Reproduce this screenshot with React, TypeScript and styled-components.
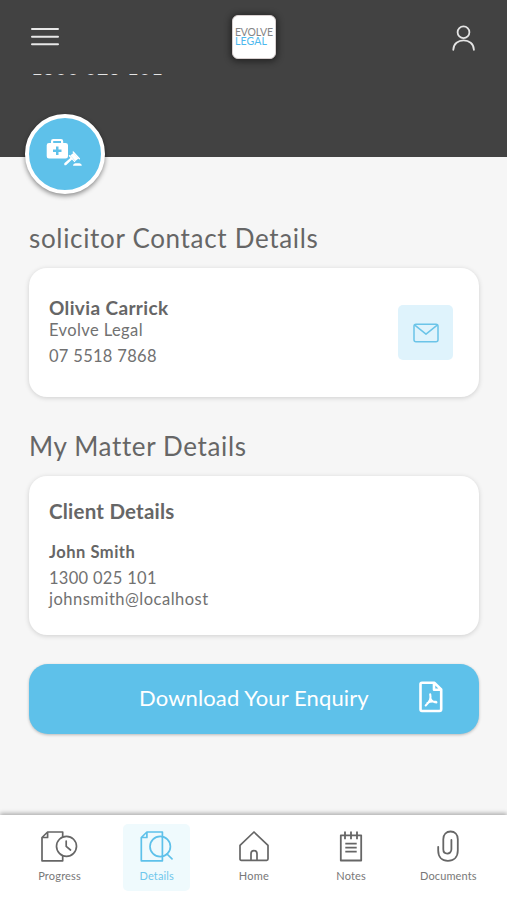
import React from "react";
import styled, { createGlobalStyle } from "styled-components";

const GlobalStyle = createGlobalStyle`
  *, *::before, *::after { box-sizing: border-box; }
  body { margin: 0; background: #f6f6f6; font-family: Lato, "Noto Sans", sans-serif; color: #666; }
  svg { display: block; }
`;

const Screen = styled.div`
  height: 900px;
  display: flex;
  flex-direction: column;
  overflow: hidden;
`;

const Header = styled.header`
  flex: none;
  height: 73px;
  padding: 0 31px;
  display: grid;
  grid-template-columns: 1fr 44px 1fr;
  align-items: center;
  background: #424242;
`;

const IconButton = styled.button<{ $end?: boolean }>`
  border: 0;
  padding: 0;
  background: none;
  justify-self: ${(p) => (p.$end ? "end" : "start")};
`;

const Logo = styled.div`
  width: 44px;
  height: 44px;
  margin-left: 0.5px;
  border-radius: 6px;
  background: #fff;
  border: 1px solid #d8d0d0;
  box-shadow: 0 1px 6px 2px rgba(0, 0, 0, 0.42);
  padding: 12.5px 0 0 2px;
  font: 400 10.5px/9px Lato, sans-serif;
  letter-spacing: -0.2px;
  color: #858585;
`;

const LogoAccent = styled.div`
  color: #4bb8ee;
  letter-spacing: 0.1px;
`;

const Hero = styled.section`
  flex: none;
  height: 84px;
  background: #424242;
  padding: 1px 0 0 31px;
`;

const HeroClip = styled.div`
  height: 3px;
  overflow: hidden;
`;

const HeroPhone = styled.div`
  margin-top: -19px;
  font-size: 20px;
  line-height: 24px;
  letter-spacing: 0.5px;
  color: #e4e4e4;
  white-space: nowrap;
`;

const MatterBadge = styled.div`
  position: absolute;
  left: 25px;
  top: 114px;
  width: 80px;
  height: 80px;
  border: 4px solid #fff;
  border-radius: 50%;
  background: #5ec1ea;
  box-shadow: 0 2px 5px rgba(0, 0, 0, 0.45);
  padding: 20px 0 0 17px;
`;

const Content = styled.main`
  flex: 1;
  padding: 66px 28px 0 29px;
`;

const Heading = styled.h1<{ $spacing: number }>`
  margin: 0 0 15px;
  font-size: 26px;
  line-height: 30px;
  font-weight: 400;
  letter-spacing: ${(p) => p.$spacing}px;
  white-space: nowrap;
`;

const Card = styled.section<{ $height: number; $gap: number }>`
  height: ${(p) => p.$height}px;
  margin-bottom: ${(p) => p.$gap}px;
  padding: 0 26px 0 20px;
  border-radius: 18px;
  background: #fff;
  box-shadow: 0 1px 5px rgba(0, 0, 0, 0.16);
  display: flex;
  align-items: center;
  justify-content: space-between;
`;

const Lines = styled.div`
  align-self: flex-start;
  display: flex;
  flex-direction: column;
`;

const Line = styled.div<{ $size: number; $top: number; $height: number; $bold?: boolean; $spacing: number }>`
  margin-top: ${(p) => p.$top}px;
  font-size: ${(p) => p.$size}px;
  line-height: ${(p) => p.$height}px;
  font-weight: ${(p) => (p.$bold ? 700 : 400)};
  letter-spacing: ${(p) => p.$spacing}px;
  color: ${(p) => (p.$bold ? "#666" : "#717171")};
  white-space: nowrap;
`;

const MailButton = styled.button`
  width: 55px;
  height: 55px;
  border: 0;
  border-radius: 5px;
  background: #dff3fc;
  padding: 1px 0 0;
  display: grid;
  place-items: center;
`;

const Download = styled.button`
  width: 450px;
  height: 70px;
  border: 0;
  border-radius: 19px;
  background: #5ec1ea;
  box-shadow: 0 1px 3px rgba(0, 0, 0, 0.25);
  color: #fff;
  padding: 0 36px 4px 110px;
  display: flex;
  align-items: center;
  justify-content: space-between;
  font: 400 22px/28px Lato, sans-serif;
  letter-spacing: 0.12px;
  white-space: nowrap;
`;

const DownloadLabel = styled.span`
  padding-top: 1px;
`;

const Nav = styled.nav`
  flex: none;
  height: 85px;
  padding: 9px 10px 0 11px;
  background: #fff;
  box-shadow: 0 -2px 4px rgba(0, 0, 0, 0.28);
  display: grid;
  grid-template-columns: repeat(5, 97.2px);
  justify-items: center;
`;

const NavItem = styled.a<{ $active?: boolean }>`
  width: 67px;
  height: 67px;
  border-radius: 5px;
  padding-top: 6px;
  display: flex;
  flex-direction: column;
  align-items: center;
  color: ${(p) => (p.$active ? "#5ec1ea" : "#666")};
  background: ${(p) => (p.$active ? "#effafd" : "transparent")};
`;

const NavLabel = styled.span<{ $spacing: number }>`
  margin-top: 7px;
  font-size: 11px;
  line-height: 14px;
  letter-spacing: ${(p) => p.$spacing}px;
  opacity: 0.88;
`;

const stroke = { fill: "none", stroke: "currentColor", strokeWidth: 1.7, strokeLinecap: "round", strokeLinejoin: "round" } as const;

const MenuIcon = () => (
  <svg width="28" height="20" viewBox="0 0 28 20" fill="none" stroke="#e8e8e8" strokeWidth="2" strokeLinecap="round">
    <path d="M1 2H27M1 9.7H27M1 17.3H27" />
  </svg>
);

const UserIcon = () => (
  <svg width="24" height="28" viewBox="0 0 24 28" fill="none" stroke="#e4e4e4" strokeWidth="1.8" strokeLinecap="round">
    <circle cx="11.5" cy="9.2" r="5.9" />
    <path d="M1.3 26.8C1.3 14.2 21.9 14.2 21.9 26.8" />
  </svg>
);

const MatterIcon = () => (
  <svg width="38" height="30" viewBox="0 0 38 30" fill="#fff">
    <path fillRule="evenodd" d="M5 5V3.2Q5 1 7.2 1H15Q17.2 1 17.2 3.2V5H19.5Q22 5 22 7.3V18.2Q22 20.5 19.5 20.5H3Q.7 20.5 .7 18.2V7.3Q.7 5 3 5ZM7.2 5H15V3H7.2ZM10 8.5V11.5H7V14H10V17H12.5V14H15.5V11.5H12.5V8.5Z" />
    <path d="M18.3 25.2L25.2 19.2L26.8 20.8L20.3 27Q19 27.6 18.3 27ZM24.2 17.4L27.4 15L32.6 20.4L29.4 22.9Z" />
    <path d="M23.4 17.8L28.6 23.4M27.2 14L33.4 20.8" stroke="#fff" strokeWidth="1.3" strokeLinecap="round" />
    <path d="M27 27.8Q27 25.3 29.4 25.3H33.4Q35.8 25.3 35.8 27.8Z" />
  </svg>
);

const MailIcon = () => (
  <svg width="26" height="20" viewBox="0 0 26 20" fill="none" stroke="#6bc4e8" strokeWidth="1.5" strokeLinejoin="round">
    <rect x="1" y="1.3" width="24" height="17.4" rx="2" />
    <path d="M1.8 2.2L13 11.2L24.2 2.2" />
  </svg>
);

const PdfIcon = () => (
  <svg width="24" height="32" viewBox="0 0 24 32" fill="none" stroke="#fff" strokeWidth="2.6" strokeLinecap="round" strokeLinejoin="round">
    <path d="M3 1.8H15.5L22.2 8.5V28.3Q22.2 30 20.5 30H3Q1.5 30 1.5 28.3V3.3Q1.5 1.8 3 1.8ZM15 2.2V8.8H21.8" />
    <path strokeWidth="2.1" d="M11.2 13.3C12.2 17.5 11.2 20 6.7 24.4M11.5 17.5C12.4 20.2 14.2 21.1 17.4 21.4M8.5 21.8Q12 19.8 17 20.9" />
  </svg>
);

const ProgressIcon = () => (
  <svg width="38" height="32" viewBox="0 0 38 32" {...stroke}>
    <path d="M21.7 7V2H6.6L1 7.5V30.8H21.7V25.5M6.6 2V7.5H1" />
    <circle cx="25.5" cy="16.3" r="10" />
    <path d="M25.2 11V16.4L29.5 20" />
  </svg>
);

const DetailsIcon = () => (
  <svg width="34" height="32" viewBox="0 0 34 32" {...stroke}>
    <path d="M22.4 6.5V2H6.9L1.3 7.5V30.8H22.4V6.5M6.9 2V7.5H1.3" />
    <circle cx="20.2" cy="16.5" r="10.2" />
    <path d="M27 24L32 28.8" />
  </svg>
);

const HomeIcon = () => (
  <svg width="30" height="32" viewBox="0 0 30 32" {...stroke}>
    <path d="M1 15.3L15 2L29 15.3V29Q29 30.3 27.7 30.3H2.3Q1 30.3 1 29ZM12 30V23.7Q12 20.7 15 20.7Q18 20.7 18 23.7V30" />
  </svg>
);

const NotesIcon = () => (
  <svg width="24" height="32" viewBox="0 0 24 32" {...stroke} strokeWidth={1.8}>
    <path strokeLinecap="butt" d="M1.8 5.3H22.2V30.5H1.8ZM6 1.5V9.3M12 1.5V9.3M18 1.5V9.3M6.3 13.7H17.7M6.3 17.6H17.7M6.3 21.7H17.7" />
  </svg>
);

const ClipIcon = () => (
  <svg width="24" height="32" viewBox="0 0 24 32" {...stroke} strokeWidth={1.8}>
    <path d="M2.2 16.8V20.5C2.2 27 6 30.8 11.9 30.8C17.8 30.8 21.8 27 21.8 20.5V9.2C21.8 4.6 18.8 1.5 14.6 1.5C10.3 1.5 7.3 4.6 7.3 9.2V19.3C7.3 25 15.4 25 15.4 19.3V10" />
  </svg>
);

const tabs = [
  { label: "Progress", Icon: ProgressIcon, spacing: 0.2 },
  { label: "Details", Icon: DetailsIcon, active: true, spacing: 0.15 },
  { label: "Home", Icon: HomeIcon, spacing: 0.3 },
  { label: "Notes", Icon: NotesIcon, spacing: 0.15 },
  { label: "Documents", Icon: ClipIcon, spacing: 0.12 },
];

export default function App() {
  return (
    <Screen>
      <GlobalStyle />
      <Header>
        <IconButton aria-label="Menu"><MenuIcon /></IconButton>
        <Logo>EVOLVE<LogoAccent>LEGAL</LogoAccent></Logo>
        <IconButton aria-label="Account" $end><UserIcon /></IconButton>
      </Header>
      <Hero>
        <HeroClip><HeroPhone>1300 025 101</HeroPhone></HeroClip>
      </Hero>
      <MatterBadge><MatterIcon /></MatterBadge>
      <Content>
        <Heading $spacing={0.68}>solicitor Contact Details</Heading>
        <Card $height={129} $gap={34}>
          <Lines>
            <Line $bold $size={19} $top={28} $height={24} $spacing={0.37}>Olivia Carrick</Line>
            <Line $size={16.5} $top={0} $height={21} $spacing={0.4}>Evolve Legal</Line>
            <Line $size={16.5} $top={5} $height={21} $spacing={0.3}>07 5518 7868</Line>
          </Lines>
          <MailButton aria-label="Email"><MailIcon /></MailButton>
        </Card>
        <Heading $spacing={0.64}>My Matter Details</Heading>
        <Card $height={159} $gap={29}>
          <Lines>
            <Line $bold $size={20.5} $top={23} $height={25} $spacing={0.22}>Client Details</Line>
            <Line $bold $size={16.5} $top={18} $height={21} $spacing={0.5}>John Smith</Line>
            <Line $size={16.5} $top={5} $height={21} $spacing={0.3}>1300 025 101</Line>
            <Line $size={16.5} $top={0} $height={21} $spacing={0.5}>johnsmith@localhost</Line>
          </Lines>
        </Card>
        <Download><DownloadLabel>Download Your Enquiry</DownloadLabel><PdfIcon /></Download>
      </Content>
      <Nav>
        {tabs.map(({ label, Icon, active, spacing }) => (
          <NavItem key={label} $active={active}>
            <Icon />
            <NavLabel $spacing={spacing}>{label}</NavLabel>
          </NavItem>
        ))}
      </Nav>
    </Screen>
  );
}
